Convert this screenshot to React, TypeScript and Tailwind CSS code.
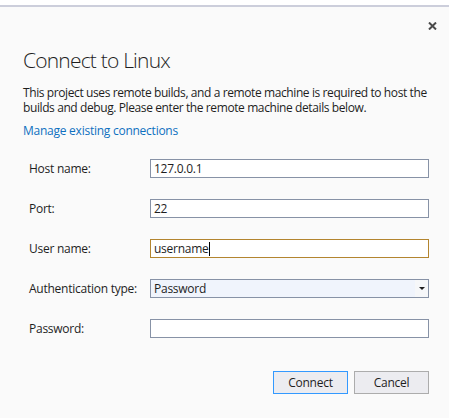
import React from "react";

const font = { fontFamily: '"Open Sans", "Noto Sans", sans-serif' };

function Row({ label, children }: { label: string; children: React.ReactNode }) {
  return (
    <div className="flex items-center h-[19px] mb-[21px]">
      <div className="w-[121px] text-[12px] text-[#1e1e1e] leading-[19px]">{label}</div>
      {children}
    </div>
  );
}

export default function App() {
  return (
    <div className="w-[449px] h-[418px] bg-[#fafafa] overflow-hidden text-[#1e1e1e]" style={font}>
      <div className="h-[5px] bg-white" />
      <div className="h-[2px] bg-[#cccedb]" />
      <div className="flex justify-end pr-[12px] pt-[15px] h-[38px]">
        <svg width="9" height="8" viewBox="0 0 9 8">
          <path d="M1 0.5 L8 7.5 M8 0.5 L1 7.5" stroke="#4a4a4a" strokeWidth="2" />
        </svg>
      </div>
      <div className="pl-[23px] pr-[16px]">
        <h1 className="text-[21px] font-light leading-[30px] text-[#1e1e1e] tracking-[-0.8px]">Connect to Linux</h1>
        <p className="mt-[10px] text-[12px] leading-[15px] text-[#1e1e1e] tracking-[-0.4px]">
          This project uses remote builds, and a remote machine is required to host the builds and debug. Please enter the remote machine details below.
        </p>
        <div className="mt-[8px] text-[12px] leading-[15px] text-[#0e70c0] tracking-[-0.25px]">Manage existing connections</div>
      </div>
      <div className="pl-[29px] pt-[21px] tracking-[-0.25px]">
        <Row label="Host name:">
          <div className="w-[279px] h-[19px] border border-[#8792a6] bg-white text-[12px] leading-[17px] px-[3px]">127.0.0.1</div>
        </Row>
        <Row label="Port:">
          <div className="w-[279px] h-[19px] border border-[#8792a6] bg-white text-[12px] leading-[17px] px-[3px]">22</div>
        </Row>
        <Row label="User name:">
          <div className="w-[279px] h-[19px] border border-[#b3852f] bg-white text-[12px] leading-[17px] px-[3px] flex items-center">
            <span>username</span>
            <span className="w-[1px] h-[14px] bg-black" />
          </div>
        </Row>
        <Row label="Authentication type:">
          <div className="w-[279px] h-[19px] border border-[#8792a6] bg-[#f0f4fc] text-[12px] leading-[17px] flex">
            <div className="flex-1 px-[3px]">Password</div>
            <div className="w-[13px] bg-[#f6f7f9] flex items-center justify-center">
              <svg width="6" height="3" viewBox="0 0 6 3"><path d="M0 0 H6 L3 3 Z" fill="#1e1e1e" /></svg>
            </div>
          </div>
        </Row>
        <Row label="Password:">
          <div className="w-[279px] h-[19px] border border-[#8792a6] bg-white" />
        </Row>
      </div>
      <div className="flex justify-end gap-[6px] pr-[20px] mt-[33px] tracking-[-0.25px]">
        <button className="w-[75px] h-[23px] border border-[#3399ff] bg-[#ececf0] text-[12px] leading-[21px] text-[#1e1e1e]">Connect</button>
        <button className="w-[75px] h-[23px] border border-[#acacac] bg-[#ececf0] text-[12px] leading-[21px] text-[#1e1e1e]">Cancel</button>
      </div>
    </div>
  );
}
